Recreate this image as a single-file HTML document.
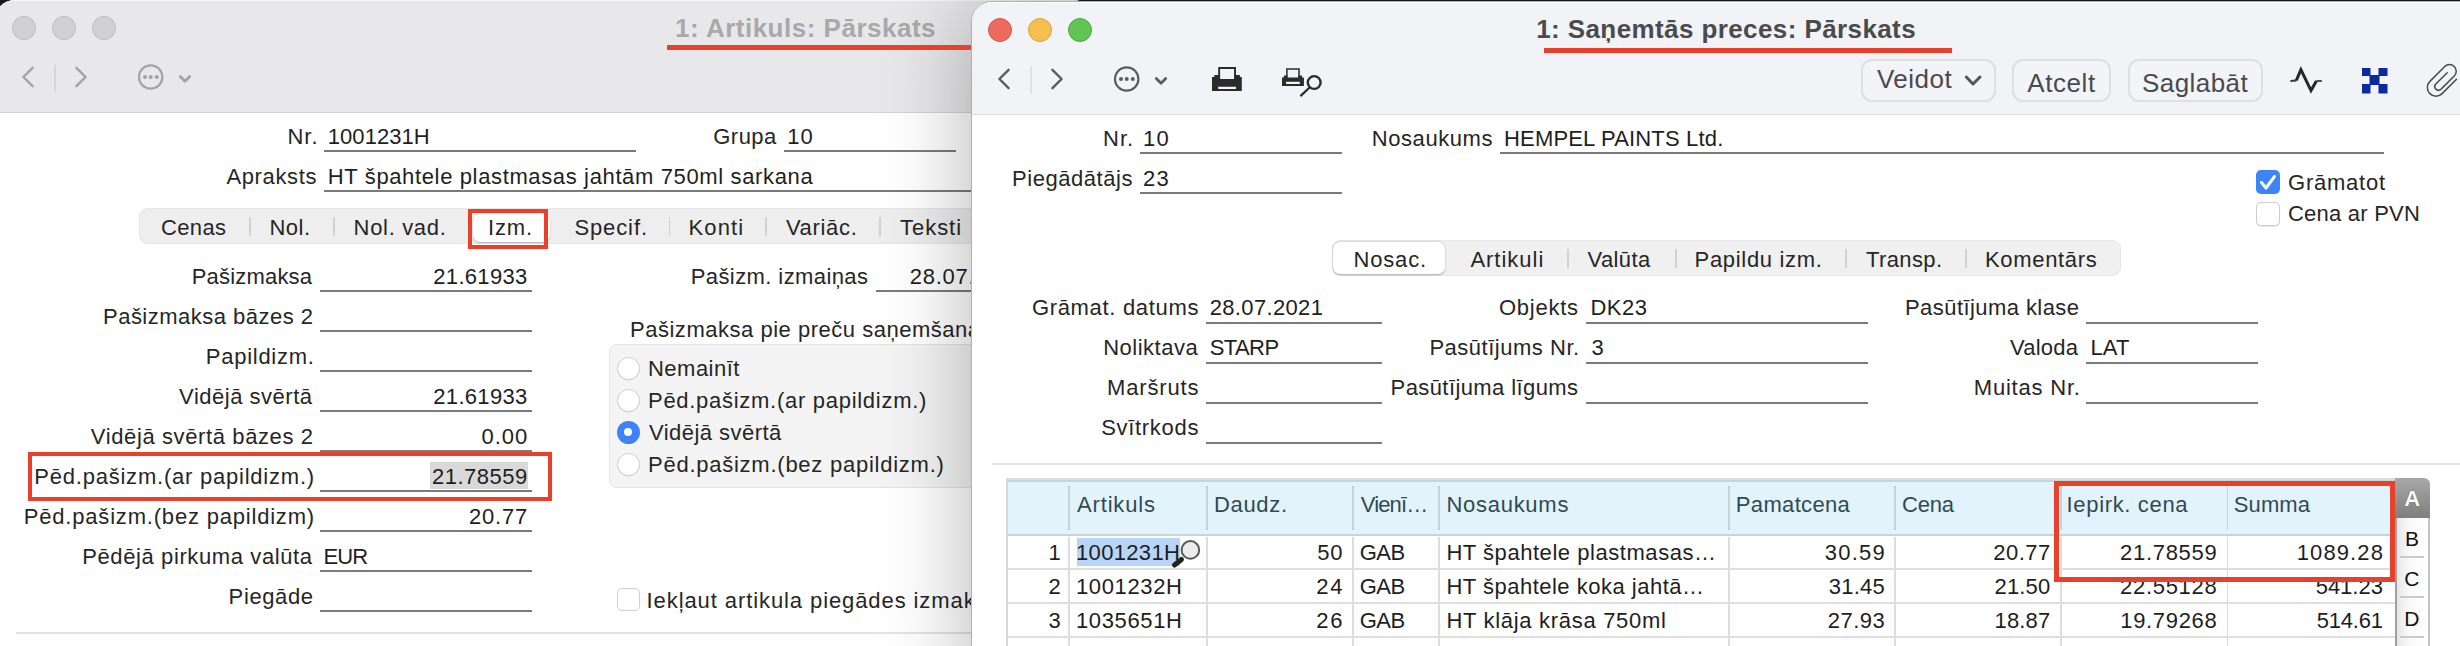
<!DOCTYPE html><html><head><meta charset="utf-8"><style>html,body{margin:0;padding:0;}body{width:2460px;height:646px;overflow:hidden;position:relative;}</style></head><body><div style="position:absolute;left:0;top:0;width:2460px;height:646px;background:#17171d"></div>
<div style="position:absolute;left:-6px;top:0px;width:1100px;height:700px;border-radius:21px 21px 0 0;background:#fff;overflow:hidden"><div style="position:absolute;left:0;top:0;width:1100px;height:112px;background:#e8e8ea;border-bottom:1px solid #d3d3d5"></div><div style="position:absolute;left:0;top:0;width:1100px;height:1px;background:#f7f7f8"></div></div>
<div style="position:absolute;left:12px;top:16px;width:22px;height:22px;border-radius:50%;background:#d1d1d4;border:1px solid #bdbdc0"></div>
<div style="position:absolute;left:52px;top:16px;width:22px;height:22px;border-radius:50%;background:#d1d1d4;border:1px solid #bdbdc0"></div>
<div style="position:absolute;left:92px;top:16px;width:22px;height:22px;border-radius:50%;background:#d1d1d4;border:1px solid #bdbdc0"></div>
<div style='font-family:"Liberation Sans", sans-serif;font-size:26px;font-weight:700;white-space:nowrap;letter-spacing:0.501px;line-height:26px;color:#a9a9ab;position:absolute;top:15px;;left:675.00px;'>1: Artikuls: Pārskats</div>
<svg style="position:absolute;left:14px;top:58px;" width="190" height="40" viewBox="0 0 190 40"><g fill="none" stroke="#a3a3a6" stroke-width="2.4" stroke-linecap="round" stroke-linejoin="round"><polyline points="18.6,9.8 9.4,19 18.6,28.2"/><polyline points="62.4,9.8 71.6,19 62.4,28.2"/><circle cx="136.7" cy="19" r="11.7" stroke-width="2.2"/><polyline points="166.3,18.6 171,23.2 175.7,18.6" stroke-width="2.8"/></g><line x1="41" y1="6.4" x2="41" y2="33.6" stroke="#d0d0d3" stroke-width="1.5"/><g fill="#a3a3a6"><circle cx="131" cy="19" r="2"/><circle cx="136.7" cy="19" r="2"/><circle cx="142.8" cy="19" r="2"/></g></svg>
<div style='font-family:"Liberation Sans", sans-serif;font-size:22px;font-weight:400;white-space:nowrap;letter-spacing:1.000px;line-height:22px;color:#262626;position:absolute;top:126px;;left:-1681.49px;width:2000px;text-align:right;'>Nr.</div>
<div style='font-family:"Liberation Sans", sans-serif;font-size:22px;font-weight:400;white-space:nowrap;letter-spacing:0.050px;line-height:22px;color:#1e1e1e;position:absolute;top:126px;;left:327.80px;'>1001231H</div>
<div style="position:absolute;left:324px;top:150px;width:312px;height:2px;background:#7b7b7b;"></div>
<div style='font-family:"Liberation Sans", sans-serif;font-size:22px;font-weight:400;white-space:nowrap;letter-spacing:0.448px;line-height:22px;color:#262626;position:absolute;top:126px;;left:-1223.32px;width:2000px;text-align:right;'>Grupa</div>
<div style='font-family:"Liberation Sans", sans-serif;font-size:22px;font-weight:400;white-space:nowrap;letter-spacing:1.162px;line-height:22px;color:#1e1e1e;position:absolute;top:126px;;left:787.20px;'>10</div>
<div style="position:absolute;left:784px;top:150px;width:172px;height:2px;background:#7b7b7b;"></div>
<div style='font-family:"Liberation Sans", sans-serif;font-size:22px;font-weight:400;white-space:nowrap;letter-spacing:0.631px;line-height:22px;color:#262626;position:absolute;top:166px;;left:-1682.97px;width:2000px;text-align:right;'>Apraksts</div>
<div style='font-family:"Liberation Sans", sans-serif;font-size:22px;font-weight:400;white-space:nowrap;letter-spacing:0.635px;line-height:22px;color:#1e1e1e;position:absolute;top:166px;;left:327.80px;'>HT špahtele plastmasas jahtām 750ml sarkana</div>
<div style="position:absolute;left:324px;top:190px;width:656px;height:2px;background:#7b7b7b;"></div>
<div style="position:absolute;left:139px;top:208px;width:900px;height:35.5px;border-radius:9px;background:#eeeeee;box-shadow:inset 0 0 0 1px #e6e6e6"></div>
<div style="position:absolute;left:472.5px;top:213.5px;width:77.5px;height:28.5px;border-radius:7px;background:#fff;box-shadow:0 1px 1.5px rgba(0,0,0,0.25)"></div>
<div style="position:absolute;left:249.25px;top:217px;width:1.5px;height:19px;background:#d2d2d2;"></div>
<div style="position:absolute;left:333.25px;top:217px;width:1.5px;height:19px;background:#d2d2d2;"></div>
<div style="position:absolute;left:668.95px;top:217px;width:1.5px;height:19px;background:#d2d2d2;"></div>
<div style="position:absolute;left:765.25px;top:217px;width:1.5px;height:19px;background:#d2d2d2;"></div>
<div style="position:absolute;left:879.45px;top:217px;width:1.5px;height:19px;background:#d2d2d2;"></div>
<div style='font-family:"Liberation Sans", sans-serif;font-size:22px;font-weight:400;white-space:nowrap;letter-spacing:0.352px;line-height:22px;color:#262626;position:absolute;top:217px;;left:161.00px;'>Cenas</div>
<div style='font-family:"Liberation Sans", sans-serif;font-size:22px;font-weight:400;white-space:nowrap;letter-spacing:0.530px;line-height:22px;color:#262626;position:absolute;top:217px;;left:269.40px;'>Nol.</div>
<div style='font-family:"Liberation Sans", sans-serif;font-size:22px;font-weight:400;white-space:nowrap;letter-spacing:0.674px;line-height:22px;color:#262626;position:absolute;top:217px;;left:353.60px;'>Nol. vad.</div>
<div style='font-family:"Liberation Sans", sans-serif;font-size:22px;font-weight:400;white-space:nowrap;letter-spacing:0.854px;line-height:22px;color:#262626;position:absolute;top:217px;;left:488.00px;'>Izm.</div>
<div style='font-family:"Liberation Sans", sans-serif;font-size:22px;font-weight:400;white-space:nowrap;letter-spacing:0.893px;line-height:22px;color:#262626;position:absolute;top:217px;;left:574.40px;'>Specif.</div>
<div style='font-family:"Liberation Sans", sans-serif;font-size:22px;font-weight:400;white-space:nowrap;letter-spacing:1.136px;line-height:22px;color:#262626;position:absolute;top:217px;;left:688.50px;'>Konti</div>
<div style='font-family:"Liberation Sans", sans-serif;font-size:22px;font-weight:400;white-space:nowrap;letter-spacing:0.679px;line-height:22px;color:#262626;position:absolute;top:217px;;left:785.90px;'>Variāc.</div>
<div style='font-family:"Liberation Sans", sans-serif;font-size:22px;font-weight:400;white-space:nowrap;letter-spacing:0.970px;line-height:22px;color:#262626;position:absolute;top:217px;;left:900.00px;'>Teksti</div>
<div style="position:absolute;left:468px;top:209px;width:80px;height:40px;box-sizing:border-box;border:4.5px solid #e8402b"></div>
<div style='font-family:"Liberation Sans", sans-serif;font-size:22px;font-weight:400;white-space:nowrap;letter-spacing:0.194px;line-height:22px;color:#262626;position:absolute;top:266px;;left:-1687.77px;width:2000px;text-align:right;'>Pašizmaksa</div>
<div style='font-family:"Liberation Sans", sans-serif;font-size:22px;font-weight:400;white-space:nowrap;letter-spacing:0.311px;line-height:22px;color:#1e1e1e;position:absolute;top:266px;;left:-1472.45px;width:2000px;text-align:right;'>21.61933</div>
<div style="position:absolute;left:320px;top:290px;width:212px;height:2px;background:#7b7b7b;"></div>
<div style='font-family:"Liberation Sans", sans-serif;font-size:22px;font-weight:400;white-space:nowrap;letter-spacing:0.487px;line-height:22px;color:#262626;position:absolute;top:306px;;left:-1686.48px;width:2000px;text-align:right;'>Pašizmaksa bāzes 2</div>
<div style="position:absolute;left:320px;top:330px;width:212px;height:2px;background:#7b7b7b;"></div>
<div style='font-family:"Liberation Sans", sans-serif;font-size:22px;font-weight:400;white-space:nowrap;letter-spacing:0.737px;line-height:22px;color:#262626;position:absolute;top:346px;;left:-1685.35px;width:2000px;text-align:right;'>Papildizm.</div>
<div style="position:absolute;left:320px;top:370px;width:212px;height:2px;background:#7b7b7b;"></div>
<div style='font-family:"Liberation Sans", sans-serif;font-size:22px;font-weight:400;white-space:nowrap;letter-spacing:0.513px;line-height:22px;color:#262626;position:absolute;top:386px;;left:-1687.45px;width:2000px;text-align:right;'>Vidējā svērtā</div>
<div style='font-family:"Liberation Sans", sans-serif;font-size:22px;font-weight:400;white-space:nowrap;letter-spacing:0.311px;line-height:22px;color:#1e1e1e;position:absolute;top:386px;;left:-1472.45px;width:2000px;text-align:right;'>21.61933</div>
<div style="position:absolute;left:320px;top:410px;width:212px;height:2px;background:#7b7b7b;"></div>
<div style='font-family:"Liberation Sans", sans-serif;font-size:22px;font-weight:400;white-space:nowrap;letter-spacing:0.615px;line-height:22px;color:#262626;position:absolute;top:426px;;left:-1686.35px;width:2000px;text-align:right;'>Vidējā svērtā bāzes 2</div>
<div style='font-family:"Liberation Sans", sans-serif;font-size:22px;font-weight:400;white-space:nowrap;letter-spacing:0.939px;line-height:22px;color:#1e1e1e;position:absolute;top:426px;;left:-1471.83px;width:2000px;text-align:right;'>0.00</div>
<div style="position:absolute;left:320px;top:450px;width:212px;height:2px;background:#7b7b7b;"></div>
<div style="position:absolute;left:430px;top:462px;width:98px;height:27px;background:#d9d9d9;"></div>
<div style='font-family:"Liberation Sans", sans-serif;font-size:22px;font-weight:400;white-space:nowrap;letter-spacing:0.776px;line-height:22px;color:#262626;position:absolute;top:466px;;left:-1685.10px;width:2000px;text-align:right;'>Pēd.pašizm.(ar papildizm.)</div>
<div style='font-family:"Liberation Sans", sans-serif;font-size:22px;font-weight:400;white-space:nowrap;letter-spacing:0.497px;line-height:22px;color:#1e1e1e;position:absolute;top:466px;;left:-1472.27px;width:2000px;text-align:right;'>21.78559</div>
<div style="position:absolute;left:320px;top:490px;width:212px;height:2px;background:#7b7b7b;"></div>
<div style='font-family:"Liberation Sans", sans-serif;font-size:22px;font-weight:400;white-space:nowrap;letter-spacing:0.804px;line-height:22px;color:#262626;position:absolute;top:506px;;left:-1685.07px;width:2000px;text-align:right;'>Pēd.pašizm.(bez papildizm)</div>
<div style='font-family:"Liberation Sans", sans-serif;font-size:22px;font-weight:400;white-space:nowrap;letter-spacing:0.795px;line-height:22px;color:#1e1e1e;position:absolute;top:506px;;left:-1471.97px;width:2000px;text-align:right;'>20.77</div>
<div style="position:absolute;left:320px;top:530px;width:212px;height:2px;background:#7b7b7b;"></div>
<div style='font-family:"Liberation Sans", sans-serif;font-size:22px;font-weight:400;white-space:nowrap;letter-spacing:0.608px;line-height:22px;color:#262626;position:absolute;top:546px;;left:-1687.36px;width:2000px;text-align:right;'>Pēdējā pirkuma valūta</div>
<div style='font-family:"Liberation Sans", sans-serif;font-size:22px;font-weight:400;white-space:nowrap;letter-spacing:-0.931px;line-height:22px;color:#1e1e1e;position:absolute;top:546px;;left:323.60px;'>EUR</div>
<div style="position:absolute;left:320px;top:570px;width:212px;height:2px;background:#7b7b7b;"></div>
<div style='font-family:"Liberation Sans", sans-serif;font-size:22px;font-weight:400;white-space:nowrap;letter-spacing:0.616px;line-height:22px;color:#262626;position:absolute;top:586px;;left:-1686.35px;width:2000px;text-align:right;'>Piegāde</div>
<div style="position:absolute;left:320px;top:610px;width:212px;height:2px;background:#7b7b7b;"></div>
<div style="position:absolute;left:28px;top:451.5px;width:524px;height:49.5px;box-sizing:border-box;border:4.5px solid #e8402b"></div>
<div style='font-family:"Liberation Sans", sans-serif;font-size:22px;font-weight:400;white-space:nowrap;letter-spacing:0.410px;line-height:22px;color:#262626;position:absolute;top:266px;;left:-1131.59px;width:2000px;text-align:right;'>Pašizm. izmaiņas</div>
<div style='font-family:"Liberation Sans", sans-serif;font-size:22px;font-weight:400;white-space:nowrap;letter-spacing:0.726px;line-height:22px;color:#1e1e1e;position:absolute;top:266px;;left:909.80px;'>28.07.2021</div>
<div style="position:absolute;left:876px;top:290px;width:114px;height:2px;background:#7b7b7b;"></div>
<div style='font-family:"Liberation Sans", sans-serif;font-size:22px;font-weight:400;white-space:nowrap;letter-spacing:0.518px;line-height:22px;color:#262626;position:absolute;top:319px;;left:630.00px;'>Pašizmaksa pie preču saņemšanas</div>
<div style="position:absolute;left:608.5px;top:344px;width:500px;height:144px;box-sizing:border-box;border-radius:8px;background:#f4f4f4;border:1px solid #e3e3e3"></div>
<div style="position:absolute;left:616.5px;top:356.5px;width:23px;height:23px;box-sizing:border-box;border-radius:50%;background:#fff;border:1px solid #cfcfcf;box-shadow:0 0.5px 1px rgba(0,0,0,0.08)"></div>
<div style='font-family:"Liberation Sans", sans-serif;font-size:22px;font-weight:400;white-space:nowrap;letter-spacing:0.483px;line-height:22px;color:#262626;position:absolute;top:358px;;left:648.00px;'>Nemainīt</div>
<div style="position:absolute;left:616.5px;top:388.5px;width:23px;height:23px;box-sizing:border-box;border-radius:50%;background:#fff;border:1px solid #cfcfcf;box-shadow:0 0.5px 1px rgba(0,0,0,0.08)"></div>
<div style='font-family:"Liberation Sans", sans-serif;font-size:22px;font-weight:400;white-space:nowrap;letter-spacing:0.716px;line-height:22px;color:#262626;position:absolute;top:390px;;left:648.00px;'>Pēd.pašizm.(ar papildizm.)</div>
<div style="position:absolute;left:616.5px;top:420.5px;width:23px;height:23px;border-radius:50%;background:#3b83f6"></div>
<div style="position:absolute;left:624px;top:428px;width:8px;height:8px;border-radius:50%;background:#fff"></div>
<div style='font-family:"Liberation Sans", sans-serif;font-size:22px;font-weight:400;white-space:nowrap;letter-spacing:0.455px;line-height:22px;color:#262626;position:absolute;top:422px;;left:649.00px;'>Vidējā svērtā</div>
<div style="position:absolute;left:616.5px;top:452.5px;width:23px;height:23px;box-sizing:border-box;border-radius:50%;background:#fff;border:1px solid #cfcfcf;box-shadow:0 0.5px 1px rgba(0,0,0,0.08)"></div>
<div style='font-family:"Liberation Sans", sans-serif;font-size:22px;font-weight:400;white-space:nowrap;letter-spacing:0.750px;line-height:22px;color:#262626;position:absolute;top:454px;;left:648.00px;'>Pēd.pašizm.(bez papildizm.)</div>
<div style="position:absolute;left:617px;top:588px;width:23px;height:23px;box-sizing:border-box;border-radius:5px;background:#fff;border:1px solid #cfcfcf"></div>
<div style='font-family:"Liberation Sans", sans-serif;font-size:22px;font-weight:400;white-space:nowrap;letter-spacing:0.908px;line-height:22px;color:#262626;position:absolute;top:590px;;left:646.60px;'>Iekļaut artikula piegādes izmaksas</div>
<div style="position:absolute;left:16px;top:632px;width:1000px;height:2px;background:#e3e3e3;"></div>
<div style="position:absolute;left:971px;top:1px;width:1600px;height:700px;border-radius:21px 21px 0 0;box-shadow:0 0 90px rgba(0,0,0,0.3)"></div>
<div style="position:absolute;left:667px;top:45px;width:310px;height:5px;background:#e8402b;"></div>
<div style="position:absolute;left:971px;top:1px;width:1600px;height:700px;box-sizing:border-box;border-radius:21px 21px 0 0;background:#fff;border:1px solid #b0b0b3;overflow:hidden"><div style="position:absolute;left:0;top:0;width:1600px;height:112px;background:#f2f3f6;border-bottom:1px solid #dadadc"></div><div style="position:absolute;left:0;top:0;width:1600px;height:1px;background:#fdfdfe"></div></div>
<div style="position:absolute;left:988px;top:18px;width:24px;height:24px;box-sizing:border-box;border-radius:50%;background:#ee6a5f;border:1px solid #d5564b"></div>
<div style="position:absolute;left:1028px;top:18px;width:24px;height:24px;box-sizing:border-box;border-radius:50%;background:#f5bf4f;border:1px solid #d9a23c"></div>
<div style="position:absolute;left:1068px;top:18px;width:24px;height:24px;box-sizing:border-box;border-radius:50%;background:#61c554;border:1px solid #4da73f"></div>
<div style='font-family:"Liberation Sans", sans-serif;font-size:26px;font-weight:700;white-space:nowrap;letter-spacing:0.404px;line-height:26px;color:#4b4b4e;position:absolute;top:16px;;left:1536.20px;'>1: Saņemtās preces: Pārskats</div>
<div style="position:absolute;left:1544px;top:48px;width:408px;height:5px;background:#e8402b;"></div>
<svg style="position:absolute;left:990px;top:60px;" width="190" height="40" viewBox="0 0 190 40"><g fill="none" stroke="#5b5b5f" stroke-width="2.4" stroke-linecap="round" stroke-linejoin="round"><polyline points="18.6,9.8 9.4,19 18.6,28.2"/><polyline points="62.4,9.8 71.6,19 62.4,28.2"/><circle cx="136.7" cy="19" r="11.7" stroke-width="2.2"/><polyline points="166.3,18.6 171,23.2 175.7,18.6" stroke-width="2.8"/></g><line x1="41" y1="6.4" x2="41" y2="33.6" stroke="#dcdcdf" stroke-width="1.5"/><g fill="#5b5b5f"><circle cx="131" cy="19" r="2"/><circle cx="136.7" cy="19" r="2"/><circle cx="142.8" cy="19" r="2"/></g></svg>
<svg style="position:absolute;left:1210px;top:65px;" width="36" height="30" viewBox="0 0 36 30"><g fill="#2b2b2b"><path d="M8.2,2 h17.8 v12 h-1.9 v-10.1 h-14 v10.1 h-1.9 z"/><path d="M2,12 h2.3 v-1.9 h25.6 v1.9 h1.9 v14 h-29.8 z M8.2,21.7 v2.3 h17.8 v-2.3 z M10.1,10.1 v3.9 h14 v-3.9 z" fill-rule="evenodd"/></g></svg>
<svg style="position:absolute;left:1280px;top:65px;" width="46" height="34" viewBox="0 0 46 34"><g fill="#2b2b2b"><path d="M6.1,3.2 h13.7 v9.2 h-1.5 v-7.7 h-10.7 v7.7 h-1.5 z"/><path d="M2,12.5 h1.9 v-1.9 h18.1 v1.9 h1.9 v8.5 h-21.9 z M6.1,16.7 v2.3 h13.7 v-2.3 z M7.6,10.6 v1.9 h10.7 v-1.9 z" fill-rule="evenodd"/></g><circle cx="34.2" cy="17.5" r="6.4" fill="none" stroke="#2b2b2b" stroke-width="2.4"/><line x1="29.3" y1="22.7" x2="21.2" y2="30.4" stroke="#2b2b2b" stroke-width="2.2" stroke-linecap="square"/></svg>
<div style="position:absolute;left:1860.5px;top:58.5px;width:135.0px;height:43px;box-sizing:border-box;border-radius:11px;background:#f3f4f7;border:2px solid #dfdfe2"></div>
<div style='font-family:"Liberation Sans", sans-serif;font-size:26px;font-weight:400;white-space:nowrap;letter-spacing:0.527px;line-height:26px;color:#4a4a4d;position:absolute;top:66px;;left:1876.90px;'>Veidot</div>
<svg style="position:absolute;left:1960px;top:70px;" width="26" height="20" viewBox="0 0 26 20"><polyline points="6.3,7 13,14 20,7" fill="none" stroke="#555558" stroke-width="3" stroke-linecap="round" stroke-linejoin="round"/></svg>
<div style="position:absolute;left:2012px;top:58.5px;width:99px;height:43px;box-sizing:border-box;border-radius:11px;background:#f3f4f7;border:2px solid #dfdfe2"></div>
<div style='font-family:"Liberation Sans", sans-serif;font-size:26px;font-weight:400;white-space:nowrap;letter-spacing:0.560px;line-height:26px;color:#4a4a4d;position:absolute;top:70px;;left:2027.30px;'>Atcelt</div>
<div style="position:absolute;left:2128px;top:58.5px;width:135px;height:43px;box-sizing:border-box;border-radius:11px;background:#f3f4f7;border:2px solid #dfdfe2"></div>
<div style='font-family:"Liberation Sans", sans-serif;font-size:26px;font-weight:400;white-space:nowrap;letter-spacing:0.440px;line-height:26px;color:#4a4a4d;position:absolute;top:70px;;left:2142.00px;'>Saglabāt</div>
<svg style="position:absolute;left:2286px;top:64px;" width="40" height="32" viewBox="0 0 40 32"><polyline points="4.4,17 10.3,16.5" fill="none" stroke="#3a3a3a" stroke-width="1.8"/><polyline points="10.3,16.5 14.9,5.7 25,26.6 30.4,17" fill="none" stroke="#262626" stroke-width="3" stroke-linejoin="miter"/><polyline points="30.4,17 35.8,17" fill="none" stroke="#3a3a3a" stroke-width="1.8"/></svg>
<svg style="position:absolute;left:2358px;top:64px;" width="34" height="34" viewBox="0 0 34 34"><g fill="#0b2a9f"><rect x="4" y="4" width="8.5" height="8" /><rect x="20.5" y="4" width="9" height="8" /><rect x="11.5" y="11" width="10" height="10" /><rect x="4" y="20" width="8.5" height="9.5" /><rect x="20.5" y="20" width="9" height="9.5" /></g></svg>
<svg style="position:absolute;left:2420px;top:60px;" width="40" height="40" viewBox="0 0 40 40"><path d="M36.5,19.2 L22.1,33.6 A8.6,8.6 0 0 1 9.9,21.4 L24.75,6.45 A6.7,6.7 0 0 1 34.25,15.95 L20.8,29.4 A3.7,3.7 0 0 1 15.6,24.2 L27.2,12.7" fill="none" stroke="#4a4a4a" stroke-width="1.5" stroke-linecap="round" stroke-linejoin="round"/></svg>
<div style='font-family:"Liberation Sans", sans-serif;font-size:22px;font-weight:400;white-space:nowrap;letter-spacing:1.000px;line-height:22px;color:#262626;position:absolute;top:128px;;left:-865.89px;width:2000px;text-align:right;'>Nr.</div>
<div style='font-family:"Liberation Sans", sans-serif;font-size:22px;font-weight:400;white-space:nowrap;letter-spacing:1.162px;line-height:22px;color:#1e1e1e;position:absolute;top:128px;;left:1143.00px;'>10</div>
<div style="position:absolute;left:1140px;top:152px;width:202px;height:2px;background:#7b7b7b;"></div>
<div style='font-family:"Liberation Sans", sans-serif;font-size:22px;font-weight:400;white-space:nowrap;letter-spacing:0.581px;line-height:22px;color:#262626;position:absolute;top:128px;;left:-506.92px;width:2000px;text-align:right;'>Nosaukums</div>
<div style='font-family:"Liberation Sans", sans-serif;font-size:22px;font-weight:400;white-space:nowrap;letter-spacing:0.170px;line-height:22px;color:#1e1e1e;position:absolute;top:128px;;left:1504.00px;'>HEMPEL PAINTS Ltd.</div>
<div style="position:absolute;left:1500px;top:152px;width:884px;height:2px;background:#7b7b7b;"></div>
<div style='font-family:"Liberation Sans", sans-serif;font-size:22px;font-weight:400;white-space:nowrap;letter-spacing:0.543px;line-height:22px;color:#262626;position:absolute;top:168px;;left:-867.06px;width:2000px;text-align:right;'>Piegādātājs</div>
<div style='font-family:"Liberation Sans", sans-serif;font-size:22px;font-weight:400;white-space:nowrap;letter-spacing:1.162px;line-height:22px;color:#1e1e1e;position:absolute;top:168px;;left:1143.00px;'>23</div>
<div style="position:absolute;left:1140px;top:192px;width:202px;height:2px;background:#7b7b7b;"></div>
<div style="position:absolute;left:2256px;top:170px;width:24px;height:24px;border-radius:5px;background:#3d84f6"></div>
<svg style="position:absolute;left:2256px;top:170px;" width="24" height="24" viewBox="0 0 24 24"><polyline points="5.5,12.5 10,18 18.5,6.5" fill="none" stroke="#fff" stroke-width="3" stroke-linecap="round" stroke-linejoin="round"/></svg>
<div style="position:absolute;left:2256px;top:202px;width:24px;height:24px;box-sizing:border-box;border-radius:5px;background:#fff;border:1px solid #cdcdcd;box-shadow:0 0.5px 1px rgba(0,0,0,0.1)"></div>
<div style='font-family:"Liberation Sans", sans-serif;font-size:22px;font-weight:400;white-space:nowrap;letter-spacing:0.774px;line-height:22px;color:#262626;position:absolute;top:172px;;left:2288.00px;'>Grāmatot</div>
<div style='font-family:"Liberation Sans", sans-serif;font-size:22px;font-weight:400;white-space:nowrap;letter-spacing:0.227px;line-height:22px;color:#262626;position:absolute;top:203px;;left:2288.00px;'>Cena ar PVN</div>
<div style="position:absolute;left:1331.5px;top:240px;width:789.5px;height:35.5px;border-radius:9px;background:#f0f0f0;box-shadow:inset 0 0 0 1px #e6e6e6"></div>
<div style="position:absolute;left:1333px;top:241.5px;width:112px;height:32.5px;border-radius:7px;background:#fff;box-shadow:0 0.5px 2px rgba(0,0,0,0.3)"></div>
<div style="position:absolute;left:1567.25px;top:249px;width:1.5px;height:19px;background:#d2d2d2;"></div>
<div style="position:absolute;left:1675.25px;top:249px;width:1.5px;height:19px;background:#d2d2d2;"></div>
<div style="position:absolute;left:1845.05px;top:249px;width:1.5px;height:19px;background:#d2d2d2;"></div>
<div style="position:absolute;left:1965.25px;top:249px;width:1.5px;height:19px;background:#d2d2d2;"></div>
<div style='font-family:"Liberation Sans", sans-serif;font-size:22px;font-weight:400;white-space:nowrap;letter-spacing:0.828px;line-height:22px;color:#262626;position:absolute;top:249px;;left:1353.50px;'>Nosac.</div>
<div style='font-family:"Liberation Sans", sans-serif;font-size:22px;font-weight:400;white-space:nowrap;letter-spacing:0.982px;line-height:22px;color:#262626;position:absolute;top:249px;;left:1470.40px;'>Artikuli</div>
<div style='font-family:"Liberation Sans", sans-serif;font-size:22px;font-weight:400;white-space:nowrap;letter-spacing:0.398px;line-height:22px;color:#262626;position:absolute;top:249px;;left:1587.50px;'>Valūta</div>
<div style='font-family:"Liberation Sans", sans-serif;font-size:22px;font-weight:400;white-space:nowrap;letter-spacing:0.680px;line-height:22px;color:#262626;position:absolute;top:249px;;left:1694.60px;'>Papildu izm.</div>
<div style='font-family:"Liberation Sans", sans-serif;font-size:22px;font-weight:400;white-space:nowrap;letter-spacing:0.391px;line-height:22px;color:#262626;position:absolute;top:249px;;left:1866.00px;'>Transp.</div>
<div style='font-family:"Liberation Sans", sans-serif;font-size:22px;font-weight:400;white-space:nowrap;letter-spacing:0.665px;line-height:22px;color:#262626;position:absolute;top:249px;;left:1985.00px;'>Komentārs</div>
<div style='font-family:"Liberation Sans", sans-serif;font-size:22px;font-weight:400;white-space:nowrap;letter-spacing:0.676px;line-height:22px;color:#262626;position:absolute;top:297px;;left:-800.92px;width:2000px;text-align:right;'>Grāmat. datums</div>
<div style='font-family:"Liberation Sans", sans-serif;font-size:22px;font-weight:400;white-space:nowrap;letter-spacing:0.348px;line-height:22px;color:#1e1e1e;position:absolute;top:297px;;left:1209.70px;'>28.07.2021</div>
<div style="position:absolute;left:1206px;top:322px;width:176px;height:2px;background:#7b7b7b;"></div>
<div style='font-family:"Liberation Sans", sans-serif;font-size:22px;font-weight:400;white-space:nowrap;letter-spacing:0.494px;line-height:22px;color:#262626;position:absolute;top:337px;;left:-801.87px;width:2000px;text-align:right;'>Noliktava</div>
<div style='font-family:"Liberation Sans", sans-serif;font-size:22px;font-weight:400;white-space:nowrap;letter-spacing:-0.585px;line-height:22px;color:#1e1e1e;position:absolute;top:337px;;left:1209.70px;'>STARP</div>
<div style="position:absolute;left:1206px;top:362px;width:176px;height:2px;background:#7b7b7b;"></div>
<div style='font-family:"Liberation Sans", sans-serif;font-size:22px;font-weight:400;white-space:nowrap;letter-spacing:0.834px;line-height:22px;color:#262626;position:absolute;top:377px;;left:-800.77px;width:2000px;text-align:right;'>Maršruts</div>
<div style="position:absolute;left:1206px;top:402px;width:176px;height:2px;background:#7b7b7b;"></div>
<div style='font-family:"Liberation Sans", sans-serif;font-size:22px;font-weight:400;white-space:nowrap;letter-spacing:0.688px;line-height:22px;color:#262626;position:absolute;top:417px;;left:-800.91px;width:2000px;text-align:right;'>Svītrkods</div>
<div style="position:absolute;left:1206px;top:442px;width:176px;height:2px;background:#7b7b7b;"></div>
<div style='font-family:"Liberation Sans", sans-serif;font-size:22px;font-weight:400;white-space:nowrap;letter-spacing:0.736px;line-height:22px;color:#262626;position:absolute;top:297px;;left:-421.26px;width:2000px;text-align:right;'>Objekts</div>
<div style='font-family:"Liberation Sans", sans-serif;font-size:22px;font-weight:400;white-space:nowrap;letter-spacing:0.501px;line-height:22px;color:#1e1e1e;position:absolute;top:297px;;left:1590.40px;'>DK23</div>
<div style="position:absolute;left:1586px;top:322px;width:282px;height:2px;background:#7b7b7b;"></div>
<div style='font-family:"Liberation Sans", sans-serif;font-size:22px;font-weight:400;white-space:nowrap;letter-spacing:0.513px;line-height:22px;color:#262626;position:absolute;top:337px;;left:-420.37px;width:2000px;text-align:right;'>Pasūtījums Nr.</div>
<div style='font-family:"Liberation Sans", sans-serif;font-size:22px;font-weight:400;white-space:nowrap;letter-spacing:0.360px;line-height:22px;color:#1e1e1e;position:absolute;top:337px;;left:1591.40px;'>3</div>
<div style="position:absolute;left:1586px;top:362px;width:282px;height:2px;background:#7b7b7b;"></div>
<div style='font-family:"Liberation Sans", sans-serif;font-size:22px;font-weight:400;white-space:nowrap;letter-spacing:0.402px;line-height:22px;color:#262626;position:absolute;top:377px;;left:-421.60px;width:2000px;text-align:right;'>Pasūtījuma līgums</div>
<div style="position:absolute;left:1586px;top:402px;width:282px;height:2px;background:#7b7b7b;"></div>
<div style='font-family:"Liberation Sans", sans-serif;font-size:22px;font-weight:400;white-space:nowrap;letter-spacing:0.434px;line-height:22px;color:#262626;position:absolute;top:297px;;left:79.47px;width:2000px;text-align:right;'>Pasūtījuma klase</div>
<div style="position:absolute;left:2086px;top:322px;width:172px;height:2px;background:#7b7b7b;"></div>
<div style='font-family:"Liberation Sans", sans-serif;font-size:22px;font-weight:400;white-space:nowrap;letter-spacing:0.233px;line-height:22px;color:#262626;position:absolute;top:337px;;left:78.27px;width:2000px;text-align:right;'>Valoda</div>
<div style='font-family:"Liberation Sans", sans-serif;font-size:22px;font-weight:400;white-space:nowrap;letter-spacing:0.162px;line-height:22px;color:#1e1e1e;position:absolute;top:337px;;left:2090.40px;'>LAT</div>
<div style="position:absolute;left:2086px;top:362px;width:172px;height:2px;background:#7b7b7b;"></div>
<div style='font-family:"Liberation Sans", sans-serif;font-size:22px;font-weight:400;white-space:nowrap;letter-spacing:0.788px;line-height:22px;color:#262626;position:absolute;top:377px;;left:80.70px;width:2000px;text-align:right;'>Muitas Nr.</div>
<div style="position:absolute;left:2086px;top:402px;width:172px;height:2px;background:#7b7b7b;"></div>
<div style="position:absolute;left:992px;top:463px;width:1500px;height:2px;background:#e2e2e2;"></div>
<div style="position:absolute;left:1006px;top:478px;width:1390px;height:200px;background:#fff;box-sizing:border-box;border-top:2px solid #dcdcdc;border-left:2px solid #d8d8d8"></div>
<div style="position:absolute;left:1008px;top:480px;width:1387px;height:54px;background:#e3f3fb;"></div>
<div style="position:absolute;left:1008px;top:480px;width:1387px;height:1.5px;background:#c6d4db;"></div>
<div style="position:absolute;left:1008px;top:534px;width:1387px;height:2px;background:#c6d4db;"></div>
<div style="position:absolute;left:1068.25px;top:486px;width:1.5px;height:44px;background:#c5d3da;"></div>
<div style="position:absolute;left:1068.25px;top:537px;width:1.5px;height:120px;background:#dcdcdc;"></div>
<div style="position:absolute;left:1206.25px;top:486px;width:1.5px;height:44px;background:#c5d3da;"></div>
<div style="position:absolute;left:1206.25px;top:537px;width:1.5px;height:120px;background:#dcdcdc;"></div>
<div style="position:absolute;left:1352.45px;top:486px;width:1.5px;height:44px;background:#c5d3da;"></div>
<div style="position:absolute;left:1352.45px;top:537px;width:1.5px;height:120px;background:#dcdcdc;"></div>
<div style="position:absolute;left:1438.05px;top:486px;width:1.5px;height:44px;background:#c5d3da;"></div>
<div style="position:absolute;left:1438.05px;top:537px;width:1.5px;height:120px;background:#dcdcdc;"></div>
<div style="position:absolute;left:1728.25px;top:486px;width:1.5px;height:44px;background:#c5d3da;"></div>
<div style="position:absolute;left:1728.25px;top:537px;width:1.5px;height:120px;background:#dcdcdc;"></div>
<div style="position:absolute;left:1894.05px;top:486px;width:1.5px;height:44px;background:#c5d3da;"></div>
<div style="position:absolute;left:1894.05px;top:537px;width:1.5px;height:120px;background:#dcdcdc;"></div>
<div style="position:absolute;left:2060.25px;top:486px;width:1.5px;height:44px;background:#c5d3da;"></div>
<div style="position:absolute;left:2060.25px;top:537px;width:1.5px;height:120px;background:#dcdcdc;"></div>
<div style="position:absolute;left:2226.65px;top:486px;width:1.5px;height:44px;background:#c5d3da;"></div>
<div style="position:absolute;left:2226.65px;top:537px;width:1.5px;height:120px;background:#dcdcdc;"></div>
<div style="position:absolute;left:1008px;top:568px;width:1387px;height:2px;background:#dedede;"></div>
<div style="position:absolute;left:1008px;top:602px;width:1387px;height:2px;background:#dedede;"></div>
<div style="position:absolute;left:1008px;top:636px;width:1387px;height:2px;background:#dedede;"></div>
<div style='font-family:"Liberation Sans", sans-serif;font-size:22px;font-weight:400;white-space:nowrap;letter-spacing:0.840px;line-height:22px;color:#2e4b55;position:absolute;top:494px;;left:1077.00px;'>Artikuls</div>
<div style='font-family:"Liberation Sans", sans-serif;font-size:22px;font-weight:400;white-space:nowrap;letter-spacing:0.661px;line-height:22px;color:#2e4b55;position:absolute;top:494px;;left:1214.00px;'>Daudz.</div>
<div style='font-family:"Liberation Sans", sans-serif;font-size:22px;font-weight:400;white-space:nowrap;letter-spacing:-0.869px;line-height:22px;color:#2e4b55;position:absolute;top:494px;;left:1360.80px;'>Vienī…</div>
<div style='font-family:"Liberation Sans", sans-serif;font-size:22px;font-weight:400;white-space:nowrap;letter-spacing:0.731px;line-height:22px;color:#2e4b55;position:absolute;top:494px;;left:1446.40px;'>Nosaukums</div>
<div style='font-family:"Liberation Sans", sans-serif;font-size:22px;font-weight:400;white-space:nowrap;letter-spacing:0.343px;line-height:22px;color:#2e4b55;position:absolute;top:494px;;left:1735.80px;'>Pamatcena</div>
<div style='font-family:"Liberation Sans", sans-serif;font-size:22px;font-weight:400;white-space:nowrap;letter-spacing:-0.219px;line-height:22px;color:#2e4b55;position:absolute;top:494px;;left:1902.00px;'>Cena</div>
<div style='font-family:"Liberation Sans", sans-serif;font-size:22px;font-weight:400;white-space:nowrap;letter-spacing:0.655px;line-height:22px;color:#2e4b55;position:absolute;top:494px;;left:2066.60px;'>Iepirk. cena</div>
<div style='font-family:"Liberation Sans", sans-serif;font-size:22px;font-weight:400;white-space:nowrap;letter-spacing:0.110px;line-height:22px;color:#2e4b55;position:absolute;top:494px;;left:2233.80px;'>Summa</div>
<div style="position:absolute;left:1076.5px;top:538px;width:103px;height:28px;background:#b8d5f8;"></div>
<div style='font-family:"Liberation Sans", sans-serif;font-size:22px;font-weight:400;white-space:nowrap;letter-spacing:0.330px;line-height:22px;color:#1e1e1e;position:absolute;top:542px;;left:-939.03px;width:2000px;text-align:right;'>1</div>
<div style='font-family:"Liberation Sans", sans-serif;font-size:22px;font-weight:400;white-space:nowrap;letter-spacing:0.336px;line-height:22px;color:#1e1e1e;position:absolute;top:542px;;left:1076.00px;'>1001231H</div>
<div style='font-family:"Liberation Sans", sans-serif;font-size:22px;font-weight:400;white-space:nowrap;letter-spacing:0.765px;line-height:22px;color:#1e1e1e;position:absolute;top:542px;;left:-656.70px;width:2000px;text-align:right;'>50</div>
<div style='font-family:"Liberation Sans", sans-serif;font-size:22px;font-weight:400;white-space:nowrap;letter-spacing:-0.593px;line-height:22px;color:#1e1e1e;position:absolute;top:542px;;left:1359.80px;'>GAB</div>
<div style='font-family:"Liberation Sans", sans-serif;font-size:22px;font-weight:400;white-space:nowrap;letter-spacing:0.546px;line-height:22px;color:#1e1e1e;position:absolute;top:542px;;left:1446.40px;'>HT špahtele plastmasas…</div>
<div style='font-family:"Liberation Sans", sans-serif;font-size:22px;font-weight:400;white-space:nowrap;letter-spacing:1.220px;line-height:22px;color:#1e1e1e;position:absolute;top:542px;;left:-114.14px;width:2000px;text-align:right;'>30.59</div>
<div style='font-family:"Liberation Sans", sans-serif;font-size:22px;font-weight:400;white-space:nowrap;letter-spacing:0.495px;line-height:22px;color:#1e1e1e;position:absolute;top:542px;;left:50.73px;width:2000px;text-align:right;'>20.77</div>
<div style='font-family:"Liberation Sans", sans-serif;font-size:22px;font-weight:400;white-space:nowrap;letter-spacing:0.711px;line-height:22px;color:#1e1e1e;position:absolute;top:542px;;left:217.45px;width:2000px;text-align:right;'>21.78559</div>
<div style='font-family:"Liberation Sans", sans-serif;font-size:22px;font-weight:400;white-space:nowrap;letter-spacing:1.118px;line-height:22px;color:#1e1e1e;position:absolute;top:542px;;left:384.05px;width:2000px;text-align:right;'>1089.28</div>
<div style='font-family:"Liberation Sans", sans-serif;font-size:22px;font-weight:400;white-space:nowrap;letter-spacing:0.330px;line-height:22px;color:#1e1e1e;position:absolute;top:576px;;left:-939.03px;width:2000px;text-align:right;'>2</div>
<div style='font-family:"Liberation Sans", sans-serif;font-size:22px;font-weight:400;white-space:nowrap;letter-spacing:0.622px;line-height:22px;color:#1e1e1e;position:absolute;top:576px;;left:1076.00px;'>1001232H</div>
<div style='font-family:"Liberation Sans", sans-serif;font-size:22px;font-weight:400;white-space:nowrap;letter-spacing:1.765px;line-height:22px;color:#1e1e1e;position:absolute;top:576px;;left:-655.70px;width:2000px;text-align:right;'>24</div>
<div style='font-family:"Liberation Sans", sans-serif;font-size:22px;font-weight:400;white-space:nowrap;letter-spacing:-0.593px;line-height:22px;color:#1e1e1e;position:absolute;top:576px;;left:1359.80px;'>GAB</div>
<div style='font-family:"Liberation Sans", sans-serif;font-size:22px;font-weight:400;white-space:nowrap;letter-spacing:0.499px;line-height:22px;color:#1e1e1e;position:absolute;top:576px;;left:1446.40px;'>HT špahtele koka jahtā…</div>
<div style='font-family:"Liberation Sans", sans-serif;font-size:22px;font-weight:400;white-space:nowrap;letter-spacing:0.195px;line-height:22px;color:#1e1e1e;position:absolute;top:576px;;left:-115.17px;width:2000px;text-align:right;'>31.45</div>
<div style='font-family:"Liberation Sans", sans-serif;font-size:22px;font-weight:400;white-space:nowrap;letter-spacing:0.145px;line-height:22px;color:#1e1e1e;position:absolute;top:576px;;left:50.38px;width:2000px;text-align:right;'>21.50</div>
<div style='font-family:"Liberation Sans", sans-serif;font-size:22px;font-weight:400;white-space:nowrap;letter-spacing:0.711px;line-height:22px;color:#1e1e1e;position:absolute;top:576px;;left:217.45px;width:2000px;text-align:right;'>22.55128</div>
<div style='font-family:"Liberation Sans", sans-serif;font-size:22px;font-weight:400;white-space:nowrap;letter-spacing:-0.011px;line-height:22px;color:#1e1e1e;position:absolute;top:576px;;left:382.92px;width:2000px;text-align:right;'>541.23</div>
<div style='font-family:"Liberation Sans", sans-serif;font-size:22px;font-weight:400;white-space:nowrap;letter-spacing:0.360px;line-height:22px;color:#1e1e1e;position:absolute;top:610px;;left:-939.00px;width:2000px;text-align:right;'>3</div>
<div style='font-family:"Liberation Sans", sans-serif;font-size:22px;font-weight:400;white-space:nowrap;letter-spacing:0.622px;line-height:22px;color:#1e1e1e;position:absolute;top:610px;;left:1076.00px;'>1035651H</div>
<div style='font-family:"Liberation Sans", sans-serif;font-size:22px;font-weight:400;white-space:nowrap;letter-spacing:1.765px;line-height:22px;color:#1e1e1e;position:absolute;top:610px;;left:-655.70px;width:2000px;text-align:right;'>26</div>
<div style='font-family:"Liberation Sans", sans-serif;font-size:22px;font-weight:400;white-space:nowrap;letter-spacing:-0.593px;line-height:22px;color:#1e1e1e;position:absolute;top:610px;;left:1359.80px;'>GAB</div>
<div style='font-family:"Liberation Sans", sans-serif;font-size:22px;font-weight:400;white-space:nowrap;letter-spacing:0.698px;line-height:22px;color:#1e1e1e;position:absolute;top:610px;;left:1446.40px;'>HT klāja krāsa 750ml</div>
<div style='font-family:"Liberation Sans", sans-serif;font-size:22px;font-weight:400;white-space:nowrap;letter-spacing:0.445px;line-height:22px;color:#1e1e1e;position:absolute;top:610px;;left:-114.92px;width:2000px;text-align:right;'>27.93</div>
<div style='font-family:"Liberation Sans", sans-serif;font-size:22px;font-weight:400;white-space:nowrap;letter-spacing:0.145px;line-height:22px;color:#1e1e1e;position:absolute;top:610px;;left:50.38px;width:2000px;text-align:right;'>18.87</div>
<div style='font-family:"Liberation Sans", sans-serif;font-size:22px;font-weight:400;white-space:nowrap;letter-spacing:0.668px;line-height:22px;color:#1e1e1e;position:absolute;top:610px;;left:217.40px;width:2000px;text-align:right;'>19.79268</div>
<div style='font-family:"Liberation Sans", sans-serif;font-size:22px;font-weight:400;white-space:nowrap;letter-spacing:-0.211px;line-height:22px;color:#1e1e1e;position:absolute;top:610px;;left:382.72px;width:2000px;text-align:right;'>514.61</div>
<svg style="position:absolute;left:1165px;top:535px;" width="40" height="40" viewBox="0 0 40 40"><circle cx="25.4" cy="14.9" r="8.8" fill="#ececec" stroke="#5a5a5a" stroke-width="2"/><line x1="16.5" y1="24.5" x2="9.5" y2="30" stroke="#222" stroke-width="5" stroke-linecap="round"/></svg>
<div style="position:absolute;left:2054px;top:481px;width:341px;height:101px;box-sizing:border-box;border:5.5px solid #e8402b"></div>
<div style="position:absolute;left:2395px;top:478px;width:35px;height:200px;box-sizing:border-box;border-left:2px solid #a0a0a0;border-right:2px solid #c4c4c4;border-top-right-radius:7px;background:linear-gradient(to right,#e6e6e6,#fafafa 40%,#fff)"></div>
<div style="position:absolute;left:2395px;top:478px;width:35px;height:40px;border-top-right-radius:6px;background:linear-gradient(#a8a8a8,#7f7f7f)"></div>
<div style='font-family:"Liberation Sans", sans-serif;font-size:22px;font-weight:700;white-space:nowrap;letter-spacing:0.480px;line-height:22px;color:#fafafa;position:absolute;top:488px;text-shadow:0 0 1px #444;left:1912.5px;width:1000px;text-align:center;'>A</div>
<div style='font-family:"Liberation Sans", sans-serif;font-size:21px;font-weight:400;white-space:nowrap;letter-spacing:0.960px;line-height:21px;color:#111;position:absolute;top:527.5px;;left:1912.5px;width:1000px;text-align:center;'>B</div>
<div style='font-family:"Liberation Sans", sans-serif;font-size:21px;font-weight:400;white-space:nowrap;letter-spacing:1.120px;line-height:21px;color:#111;position:absolute;top:567.5px;;left:1912.5px;width:1000px;text-align:center;'>C</div>
<div style='font-family:"Liberation Sans", sans-serif;font-size:21px;font-weight:400;white-space:nowrap;letter-spacing:1.120px;line-height:21px;color:#111;position:absolute;top:607.5px;;left:1912.5px;width:1000px;text-align:center;'>D</div>
<div style="position:absolute;left:2400px;top:556px;width:24px;height:2px;background:#cacaca;"></div>
<div style="position:absolute;left:2400px;top:596px;width:24px;height:2px;background:#cacaca;"></div>
<div style="position:absolute;left:2400px;top:636px;width:24px;height:2px;background:#cacaca;"></div></body></html>
